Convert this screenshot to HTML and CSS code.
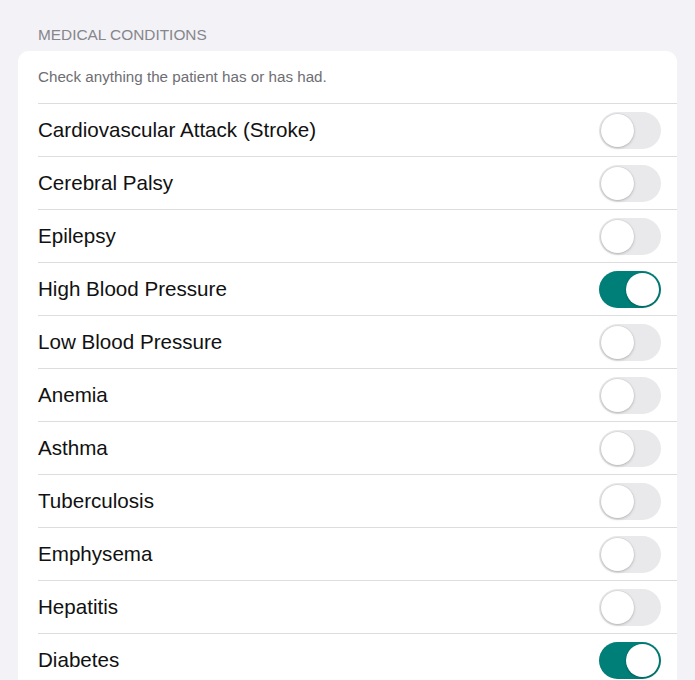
FILE: index.html
```html
<!DOCTYPE html>
<html>
<head>
<meta charset="utf-8">
<link rel="stylesheet" href="styles.css">
</head>
<body>
<div class="section-title">MEDICAL CONDITIONS</div>
<div class="card">
  <div class="hint">Check anything the patient has or has had.</div>
  <div class="row"><span class="label">Cardiovascular Attack (Stroke)</span><span class="toggle"></span></div>
  <div class="row"><span class="label">Cerebral Palsy</span><span class="toggle"></span></div>
  <div class="row"><span class="label">Epilepsy</span><span class="toggle"></span></div>
  <div class="row"><span class="label">High Blood Pressure</span><span class="toggle on"></span></div>
  <div class="row"><span class="label">Low Blood Pressure</span><span class="toggle"></span></div>
  <div class="row"><span class="label">Anemia</span><span class="toggle"></span></div>
  <div class="row"><span class="label">Asthma</span><span class="toggle"></span></div>
  <div class="row"><span class="label">Tuberculosis</span><span class="toggle"></span></div>
  <div class="row"><span class="label">Emphysema</span><span class="toggle"></span></div>
  <div class="row"><span class="label">Hepatitis</span><span class="toggle"></span></div>
  <div class="row"><span class="label">Diabetes</span><span class="toggle on"></span></div>
</div>
</body>
</html>
```
FILE: styles.css
```css
html, body {
  margin: 0;
  padding: 0;
  background: #f2f2f7;
  font-family: "Liberation Sans", Arial, sans-serif;
  overflow: hidden;
}
.section-title {
  padding: 26px 0 0 38px;
  height: 25px;
  font-size: 15.4px;
  line-height: 17px;
  color: #86868b;
}
.card {
  margin: 0 18px;
  background: #ffffff;
  border-radius: 11px 11px 0 0;
  padding-left: 20px;
}
.hint {
  height: 52px;
  line-height: 52px;
  font-size: 15.2px;
  color: #6e6e73;
  border-bottom: 1px solid #dddde0;
}
.row {
  height: 52px;
  display: flex;
  align-items: center;
  justify-content: space-between;
  padding-right: 16px;
  border-bottom: 1px solid #dddde0;
}
.label {
  font-size: 20.6px;
  line-height: 24px;
  color: #111111;
}
.toggle {
  position: relative;
  width: 62px;
  height: 37px;
  border-radius: 19px;
  background: #e9e9eb;
  box-sizing: border-box;
}
.toggle::after {
  content: "";
  position: absolute;
  top: 2px;
  left: 2px;
  width: 33px;
  height: 33px;
  border-radius: 50%;
  background: #ffffff;
  box-shadow: 0 1px 3px rgba(0,0,0,0.22), 0 0 0 0.5px rgba(0,0,0,0.06);
}
.toggle.on {
  background: #007f78;
}
.toggle.on::after {
  left: 27px;
}
```
